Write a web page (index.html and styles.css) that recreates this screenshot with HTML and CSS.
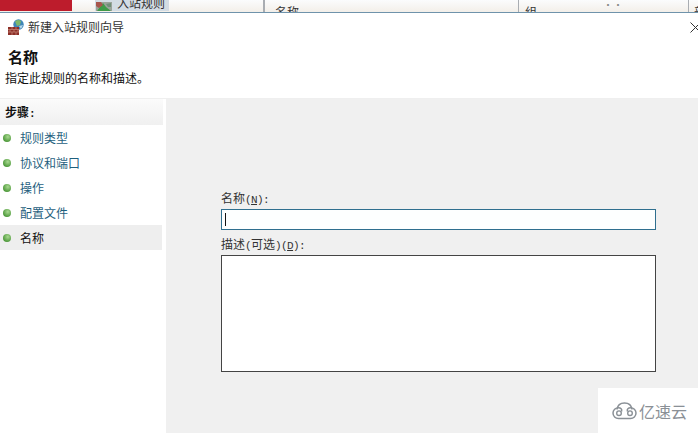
FILE: index.html
```html
<!DOCTYPE html>
<html lang="zh-CN">
<head>
    <meta charset="UTF-8">
    <title>新建入站规则向导</title>
    <link rel="stylesheet" href="styles.css">
</head>
<body>
    <div class="back-strip">
        <div class="back-red"></div>
        <div class="back-tab">
            <svg class="back-tab-icon" width="16" height="9" viewBox="0 0 16 9">
                <rect width="16" height="9" fill="#9aa39a"/>
                <path d="M1 9 L7 1 L10 5 L15 9 Z" fill="#3f9a48"/>
                <path d="M0 0 L5 0 L7 3 L3 6 L0 4 Z" fill="#a8554c"/>
                <path d="M10 2 L15 1 L15 5 L12 5 Z" fill="#6f8f78"/>
            </svg>
            <span class="back-tab-text">入站规则</span>
        </div>
        <div class="back-col back-col-name">名称</div>
        <div class="back-col back-col-group">组<span class="back-dots">··</span></div>
        <div class="back-col back-col-last">部</div>
    </div>

    <div class="dialog">
        <div class="titlebar">
            <svg class="app-icon" width="16" height="16" viewBox="0 0 16 16">
                <circle cx="10.5" cy="5.5" r="5.2" fill="#3f86b8"/>
                <path d="M7 2.5 Q10 0 13 2 L12 6 L9 7 Z" fill="#7fb86a"/>
                <path d="M11 7 L15 6 L13 10 Z" fill="#b9d9ea"/>
                <rect x="0" y="8" width="11" height="8" fill="#8c2f28"/>
                <path d="M0 10.5 H11 M0 13 H11 M4 8 V10.5 M8 8 V10.5 M2 10.5 V13 M6 10.5 V13 M10 10.5 V13 M4 13 V16 M8 13 V16" stroke="#c98a78" stroke-width="0.7" fill="none"/>
            </svg>
            <span class="title-text">新建入站规则向导</span>
            <svg class="close-icon" width="8" height="11" viewBox="0 0 8 11">
                <path d="M0.5 0.5 L11 11 M0.5 10.5 L11 0" stroke="#333" stroke-width="1" fill="none"/>
            </svg>
        </div>

        <div class="header">
            <h1>名称</h1>
            <p>指定此规则的名称和描述。</p>
        </div>

        <div class="content">
            <div class="sidebar">
                <div class="steps-title">步骤<span class="ascii">:</span></div>
                <div class="step"><span class="dot"></span>规则类型</div>
                <div class="step"><span class="dot"></span>协议和端口</div>
                <div class="step"><span class="dot"></span>操作</div>
                <div class="step"><span class="dot"></span>配置文件</div>
                <div class="step step-active"><span class="dot"></span>名称</div>
            </div>
            <div class="panel">
                <label class="field-label">名称<span class="ascii">(<u>N</u>):</span></label>
                <div class="name-input"><span class="caret"></span></div>
                <label class="field-label desc-label">描述<span class="ascii">(</span>可选<span class="ascii">)(<u>D</u>):</span></label>
                <div class="desc-input"></div>
            </div>
        </div>
    </div>

    <div class="watermark">
        <svg class="watermark-logo" width="25" height="18" viewBox="0 0 25 18">
            <path d="M5 7.5 C5.5 3.5 8.5 1 12.5 1 C16.5 1 19.5 3.5 20 7.5" fill="none" stroke="#8a9096" stroke-width="1.5"/>
            <path d="M9.5 9.5 C10.5 7 8.5 5.8 6.5 5.8 C3.5 5.8 1 8 1 11 C1 14.2 3.5 16.6 6.5 16.6 H18.5 C21.5 16.6 24 14.2 24 11 C24 8 21.5 5.8 18.5 5.8 C16.5 5.8 14.5 7 15.5 9.5" fill="none" stroke="#8a9096" stroke-width="1.5"/>
            <circle cx="7" cy="11.2" r="2.3" fill="none" stroke="#8a9096" stroke-width="1.4"/>
            <circle cx="18" cy="11.2" r="2.3" fill="none" stroke="#8a9096" stroke-width="1.4"/>
        </svg>
        <span>亿速云</span>
    </div>
</body>
</html>
```

FILE: styles.css
```css
* {
    box-sizing: border-box;
}

body {
    margin: 0;
    width: 698px;
    height: 433px;
    overflow: hidden;
    position: relative;
    background-color: #f0f0f0;
    font-family: "Noto Sans CJK SC", "Liberation Sans", sans-serif;
    color: #222;
}

/* half-width latin, the dialog font has 6px wide ascii */
.ascii {
    font-family: "Liberation Mono", monospace;
    font-size: 11px;
    letter-spacing: -0.6px;
}

/* window behind the dialog, only its bottom edge shows */
.back-strip {
    height: 13px;
    display: flex;
    overflow: hidden;
    background: linear-gradient(#fbfcfd, #f3efe9);
    border-bottom: 1px solid #6f93ab;
    font-size: 12px;
    line-height: 16px;
    color: #333;
}

.back-red {
    width: 72px;
    height: 11px;
    background-color: #bd1c2c;
    flex: none;
}

.back-tab {
    width: 74px;
    height: 11px;
    margin-left: 23px;
    padding-left: 1px;
    display: flex;
    gap: 5px;
    background-color: #d3dce4;
    flex: none;
}

.back-tab-icon {
    flex: none;
    margin-top: 2px;
}

.back-tab-text {
    margin-top: -5px;
}

.back-col {
    flex: none;
    height: 12px;
    padding-top: 1px;
    border-left: 1px solid #a9adb2;
    line-height: 22px;
}

.back-col-name {
    width: 255px;
    margin-left: 94px;
    padding-left: 11px;
    box-shadow: inset 4px 0 0 -3px #a9adb2;
}

.back-col-group {
    width: 170px;
    padding-left: 6px;
    position: relative;
}

.back-dots {
    position: absolute;
    left: 84px;
    top: -6px;
    font-size: 10px;
    color: #888;
}

.back-col-last {
    width: 11px;
    padding-left: 5px;
}

.dialog {
    height: 420px;
    display: flex;
    flex-direction: column;
}

.titlebar {
    height: 27px;
    padding: 6px 0 0 8px;
    display: flex;
    align-items: flex-start;
    background-color: white;
}

.app-icon {
    flex: none;
}

.title-text {
    margin-left: 4px;
    font-size: 12px;
    line-height: 16px;
    color: #333;
}

.close-icon {
    margin-left: auto;
    margin-top: 3px;
}

.header {
    height: 59px;
    padding-left: 5px;
    background-color: white;
    border-bottom: 1px solid #efefef;
}

.header h1 {
    margin: 8px 0 0 3px;
    font-size: 15px;
    line-height: 18px;
    font-weight: bold;
    color: #111;
}

.header p {
    margin: 3px 0 0;
    font-size: 12px;
    line-height: 17px;
    color: #111;
}

.content {
    flex: 1;
    display: flex;
}

.sidebar {
    width: 166px;
    flex: none;
    padding-right: 3px;
    background-color: white;
}

.steps-title {
    height: 26px;
    padding-left: 5px;
    font-size: 12px;
    line-height: 26px;
    font-weight: bold;
    color: #111;
    background: linear-gradient(#fbfbfb, #f0f0f0);
}

.step {
    height: 25px;
    display: flex;
    align-items: center;
    font-size: 12px;
    color: #1f5f7e;
}

.step-active {
    margin-right: 1px;
    background-color: #eeeeee;
    color: #111;
}

.dot {
    width: 8px;
    height: 8px;
    margin: 0 9px 0 3px;
    border-radius: 50%;
    background: radial-gradient(circle at 60% 35%, #a8d890, #4f9a3c 70%);
}

.panel {
    flex: 1;
    padding: 90px 42px 0 55px;
    background-color: #f0f0f0;
}

.field-label {
    display: block;
    height: 17px;
    font-size: 12px;
    line-height: 17px;
    color: #333;
}

.name-input {
    height: 21px;
    margin-top: 3px;
    padding: 3px 0 0 3px;
    background-color: #fdffff;
    border: 1px solid #2f6f8f;
}

.caret {
    display: block;
    width: 1px;
    height: 13px;
    background-color: #111;
}

.desc-label {
    margin-top: 5px;
}

.desc-input {
    height: 117px;
    margin-top: 3px;
    background-color: white;
    border: 1px solid #444;
}

.watermark {
    position: absolute;
    right: 0;
    bottom: 0;
    width: 100px;
    height: 45px;
    padding-left: 14px;
    display: flex;
    align-items: center;
    gap: 2px;
    background-color: white;
    font-size: 16px;
    color: #8a9096;
}

.watermark-logo {
    flex: none;
}
```
